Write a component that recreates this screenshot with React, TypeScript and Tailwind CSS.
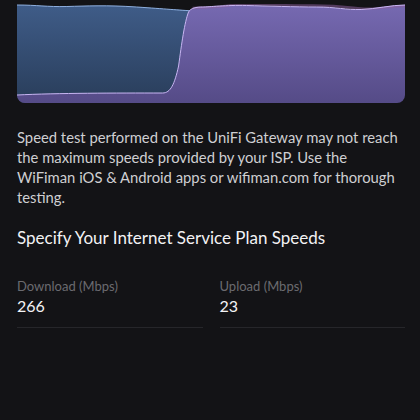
import React from "react";

interface SpeedField {
    label: string;
    value: string;
}

const fields: SpeedField[] = [
    { label: "Download (Mbps)", value: "266" },
    { label: "Upload (Mbps)", value: "23" },
];

function SpeedChart() {
    return (
        <div className="h-[99px] w-full overflow-hidden rounded-b-[8px]">
            <svg viewBox="0 0 389 99" preserveAspectRatio="none" className="block h-full w-full">
                <defs>
                    <linearGradient id="blueFill" x1="0" y1="0" x2="0" y2="1">
                        <stop offset="0" stopColor="#3f5c88" />
                        <stop offset="1" stopColor="#293d5a" />
                    </linearGradient>
                    <linearGradient id="purpleFill" x1="0" y1="0" x2="0" y2="1">
                        <stop offset="0" stopColor="#7669b1" />
                        <stop offset="1" stopColor="#554b87" />
                    </linearGradient>
                </defs>

                {/* download area */}
                <path
                    d="M0 1 C 20 1, 30 3, 50 2.5 S 90 1, 120 3 S 160 6, 190 7 L 190 99 L 0 99 Z"
                    fill="url(#blueFill)"
                />
                <path
                    d="M0 1 C 20 1, 30 3, 50 2.5 S 90 1, 120 3 S 160 6, 178 7"
                    fill="none"
                    stroke="#8fb0e0"
                    strokeWidth="1"
                />

                {/* upload area */}
                <path
                    d="M0 91 C 40 89, 100 89, 146 89 C 154 89, 158 80, 162 62 C 165 40, 168 18, 172 8 C 174 4, 180 3, 186 3 S 210 1, 230 1.5 S 280 3, 300 3 S 330 6, 345 5.5 S 375 1, 389 1 L 389 99 L 0 99 Z"
                    fill="url(#purpleFill)"
                />
                <path
                    d="M176 4 C 186 3, 200 4, 215 1 S 260 2, 290 1.5 S 330 3, 345 4.5 S 375 2, 389 2"
                    fill="none"
                    stroke="#8a5e9a"
                    strokeWidth="2.5"
                    opacity="0.55"
                />
                <path
                    d="M0 91 C 40 89, 100 89, 146 89 C 154 89, 158 80, 162 62 C 165 40, 168 18, 172 8 C 174 4, 180 3, 186 3 S 210 1, 230 1.5 S 280 3, 300 3 S 330 6, 345 5.5 S 375 1, 389 1"
                    fill="none"
                    stroke="#c8b6f2"
                    strokeWidth="1"
                />
            </svg>
        </div>
    );
}

export default function App() {
    return (
        <div
            className="h-[420px] w-[420px] overflow-hidden bg-[#131316] pl-[17px] pr-[15px] pt-[4px]"
            style={{ fontFamily: "Lato, 'Noto Sans', sans-serif" }}
        >
            <SpeedChart />

            <p className="mt-[24px] text-[14.8px] leading-[20px] text-[#cfcfd2]">
                Speed test performed on the UniFi Gateway may not reach the maximum speeds provided by
                your ISP. Use the WiFiman iOS &amp; Android apps or wifiman.com for thorough testing.
            </p>

            <h2 className="mt-[19px] text-[17px] leading-[24px] text-[#f2f2f4]">
                Specify Your Internet Service Plan Speeds
            </h2>

            <div className="mt-[27px] grid grid-cols-2 gap-[17px]">
                {fields.map((f) => (
                    <div key={f.label} className="border-b border-[#26262a] pb-[10px]">
                        <div className="text-[13px] leading-[18px] text-[#6b6b70]">{f.label}</div>
                        <div className="text-[16px] leading-[22px] text-[#f4f4f6]">{f.value}</div>
                    </div>
                ))}
            </div>
        </div>
    );
}
